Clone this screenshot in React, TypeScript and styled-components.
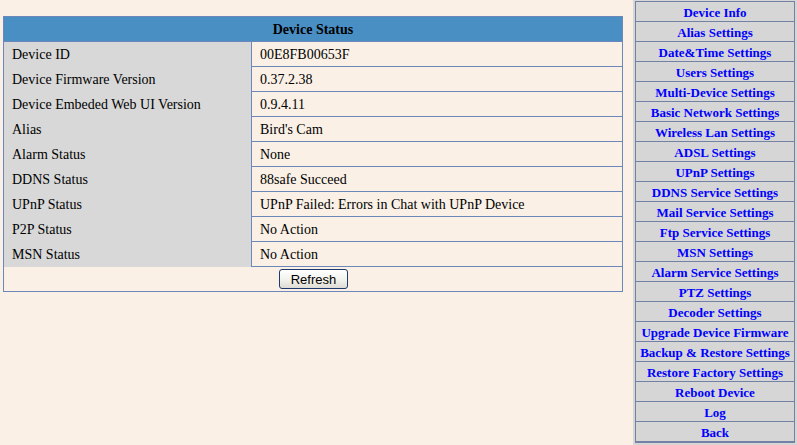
import React from "react";
import styled, { createGlobalStyle } from "styled-components";

const Global = createGlobalStyle`
  html, body { margin: 0; padding: 0; background: #faf0e6; }
  body { width: 797px; height: 445px; overflow: hidden; }
`;

const Page = styled.div`
  display: flex;
  align-items: flex-start;
  width: 797px;
  height: 445px;
`;

const Main = styled.div`
  flex: 0 0 620px;
  margin: 16px 0 0 3px;
  border: 1px solid #6c88bb;
  box-sizing: border-box;
  font-family: "Liberation Serif", "Times New Roman", serif;
  font-size: 14px;
  color: #000;
`;

const Header = styled.div`
  height: 24px;
  line-height: 26px;
  background: #4a8fc4;
  text-align: center;
  font-weight: bold;
  border-bottom: 1px solid #6c88bb;
`;

const Row = styled.div`
  display: grid;
  grid-template-columns: 248px 1fr;
  height: 25px;
  border-bottom: 1px solid #6c88bb;
  box-sizing: border-box;
`;

const LabelCell = styled.div`
  background: #d8d8d8;
  border-right: 1px solid #6c88bb;
  padding-left: 8px;
  line-height: 25px;
  white-space: nowrap;
`;

const ValueCell = styled.div`
  padding-left: 8px;
  line-height: 25px;
  white-space: nowrap;
`;

const ButtonRow = styled.div`
  height: 24px;
  display: flex;
  justify-content: center;
  align-items: center;
`;

const Button = styled.button`
  font-family: "Liberation Sans", Arial, sans-serif;
  font-size: 13px;
  height: 20px;
  width: 69px;
  padding: 0;
  margin-left: 1px;
  border: 1px solid #1c3a6e;
  border-radius: 3px;
  background: linear-gradient(#ffffff, #f0f0ea 60%, #dcdcd4);
  color: #000;
`;

const Sidebar = styled.div`
  flex: 0 0 164px;
  margin-left: 10px;
  height: 445px;
  background: #d6d6d6;
  padding: 1px 2px 0 2px;
  box-sizing: border-box;
`;

const NavList = styled.div`
  border: 1px solid #7381a4;
  border-top: none;
  border-bottom-width: 2px;
`;

const NavItem = styled.a`
  display: block;
  height: 20px;
  box-sizing: border-box;
  border-top: 1px solid #7381a4;
  padding-top: 3px;
  line-height: 16px;
  text-align: center;
  font-family: "Liberation Serif", "Times New Roman", serif;
  font-weight: bold;
  font-size: 13px;
  color: #0000ff;
  text-decoration: none;
  white-space: nowrap;
`;

const rows: [string, string][] = [
  ["Device ID", "00E8FB00653F"],
  ["Device Firmware Version", "0.37.2.38"],
  ["Device Embeded Web UI Version", "0.9.4.11"],
  ["Alias", "Bird's Cam"],
  ["Alarm Status", "None"],
  ["DDNS Status", "88safe Succeed"],
  ["UPnP Status", "UPnP Failed: Errors in Chat with UPnP Device"],
  ["P2P Status", "No Action"],
  ["MSN Status", "No Action"],
];

const nav = [
  "Device Info",
  "Alias Settings",
  "Date&Time Settings",
  "Users Settings",
  "Multi-Device Settings",
  "Basic Network Settings",
  "Wireless Lan Settings",
  "ADSL Settings",
  "UPnP Settings",
  "DDNS Service Settings",
  "Mail Service Settings",
  "Ftp Service Settings",
  "MSN Settings",
  "Alarm Service Settings",
  "PTZ Settings",
  "Decoder Settings",
  "Upgrade Device Firmware",
  "Backup & Restore Settings",
  "Restore Factory Settings",
  "Reboot Device",
  "Log",
  "Back",
];

export default function App() {
  return (
    <>
      <Global />
      <Page>
        <Main>
          <Header>Device Status</Header>
          {rows.map(([k, v]) => (
            <Row key={k}>
              <LabelCell>{k}</LabelCell>
              <ValueCell>{v}</ValueCell>
            </Row>
          ))}
          <ButtonRow>
            <Button>Refresh</Button>
          </ButtonRow>
        </Main>
        <Sidebar>
          <NavList>
            {nav.map((n) => (
              <NavItem key={n} href="#">
                {n}
              </NavItem>
            ))}
          </NavList>
        </Sidebar>
      </Page>
    </>
  );
}
